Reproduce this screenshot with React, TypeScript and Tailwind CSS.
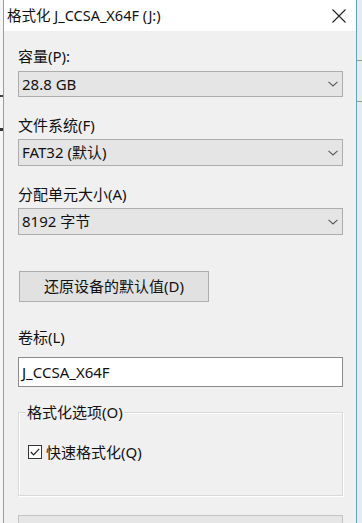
import React from "react";

const font = { fontFamily: '"Noto Sans", "Noto Sans CJK SC", sans-serif' };

function Chevron() {
  return (
    <svg width="10" height="6" viewBox="0 0 10 6" className="shrink-0">
      <path d="M0.5 0.8 L5 5 L9.5 0.8" fill="none" stroke="#5a5a5a" strokeWidth="1.1" />
    </svg>
  );
}

function Select({ value, h }: { value: string; h: string }) {
  return (
    <div className={`flex shrink-0 items-center justify-between border border-[#adadad] bg-[#e5e5e5] pl-[3px] pr-[4px] ${h}`}>
      <span className="text-[15px] leading-none text-[#111]">{value}</span>
      <Chevron />
    </div>
  );
}

export default function App() {
  return (
    <div className="flex h-[523px] w-[362px] items-start overflow-hidden bg-[#f3f4f4]" style={font}>
      <div className="flex h-[523px] w-[3px] shrink-0 flex-col bg-[#f6f6f6]">
        <div className="mt-[95px] h-[2px] w-[3px] shrink-0 bg-[#444]" />
        <div className="mt-[31px] h-[3px] w-[3px] shrink-0 bg-[#333]" />
      </div>
      <div className="h-[523px] w-px shrink-0 bg-[#7ea6ba]" />
      <div className="flex h-[523px] w-[352px] shrink-0 flex-col overflow-hidden bg-[#f0f0f0]">
        {/* title bar */}
        <div className="flex h-[31px] shrink-0 items-center justify-between bg-white pl-[3px] pr-[10px]">
          <span className="text-[14.5px] leading-none text-[#111]">格式化 J_CCSA_X64F (J:)</span>
          <svg width="14" height="14" viewBox="0 0 14 14" className="shrink-0">
            <path d="M0.5 0.5 L13.5 13.5 M13.5 0.5 L0.5 13.5" stroke="#222" strokeWidth="1.1" />
          </svg>
        </div>
        <div className="flex shrink-0 flex-col pl-[14px] pr-[13px]">
          <div className="mt-[15px] h-[20px] shrink-0 text-[15px] leading-[20px] text-[#111]">容量(P):</div>
          <div className="mt-[5px] shrink-0">
            <Select value="28.8 GB" h="h-[26px]" />
          </div>
          <div className="mt-[18px] h-[20px] shrink-0 text-[15px] leading-[20px] text-[#111]">文件系统(F)</div>
          <div className="mt-[4px] shrink-0">
            <Select value="FAT32 (默认)" h="h-[27px]" />
          </div>
          <div className="mt-[18px] h-[20px] shrink-0 text-[15px] leading-[20px] text-[#111]">分配单元大小(A)</div>
          <div className="mt-[4px] shrink-0">
            <Select value="8192 字节" h="h-[27px]" />
          </div>
          <div className="mt-[36px] ml-px flex h-[31px] w-[190px] shrink-0 items-center justify-center border border-[#adadad] bg-[#e1e1e1] text-[15px] leading-none text-[#111]">
            还原设备的默认值(D)
          </div>
          <div className="mt-[25px] h-[20px] shrink-0 text-[15px] leading-[20px] text-[#111]">卷标(L)</div>
          <div className="mt-[10px] flex h-[30px] shrink-0 items-center border border-[#8a8a8a] bg-white pl-[3px] text-[15px] leading-none text-[#111]">
            J_CCSA_X64F
          </div>
          <div className="relative mt-[25px] h-[84px] shrink-0 border border-[#d9d9d9] shadow-[inset_1px_1px_0_#ffffff,1px_1px_0_#ffffff]">
            <span className="absolute left-[7px] top-[-11px] bg-[#f0f0f0] px-[1px] text-[15px] leading-[20px] text-[#111]">
              格式化选项(O)
            </span>
            <div className="ml-[9px] mt-[29px] flex items-center gap-[4px]">
              <div className="flex h-[14px] w-[14px] shrink-0 items-center justify-center border border-[#333] bg-white">
                <svg width="10" height="8" viewBox="0 0 10 8">
                  <path d="M0.8 4 L3.6 6.8 L9.2 0.8" fill="none" stroke="#222" strokeWidth="1.2" />
                </svg>
              </div>
              <span className="text-[15px] leading-[20px] text-[#111]">快速格式化(Q)</span>
            </div>
          </div>
          <div className="mt-[19px] h-[20px] shrink-0 border border-[#c4c4c4] bg-[#e6e6e6]" />
        </div>
      </div>
      <div className="h-[523px] w-px shrink-0 bg-[#5fa5b8]" />
      <div className="flex h-[523px] flex-1 flex-col bg-[#e8ebeb]">
        <div className="mt-[60px] h-[1px] shrink-0 bg-[#999]" />
        <div className="mt-[40px] h-[1px] shrink-0 bg-[#999]" />
      </div>
    </div>
  );
}
